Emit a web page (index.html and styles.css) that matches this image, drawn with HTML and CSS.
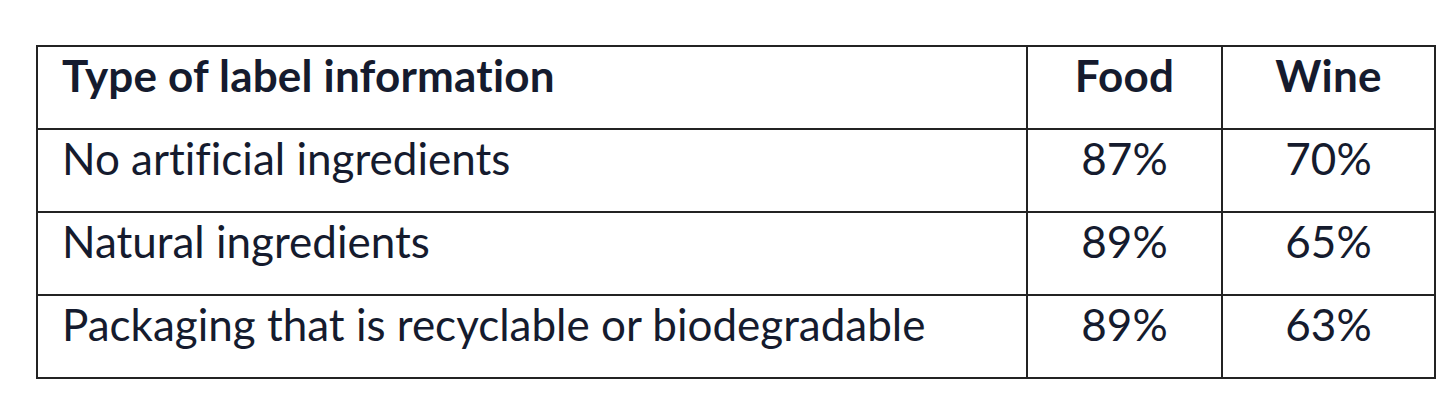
FILE: index.html
```html
<!DOCTYPE html>
<html lang="en">
<head>
<meta charset="utf-8">
<title>Label information</title>
<link rel="stylesheet" href="styles.css">
</head>
<body>
<table class="label-table">
  <colgroup>
    <col class="col-type">
    <col class="col-food">
    <col class="col-wine">
  </colgroup>
  <thead>
    <tr>
      <th class="cell cell-text">Type of label information</th>
      <th class="cell cell-num">Food</th>
      <th class="cell cell-num">Wine</th>
    </tr>
  </thead>
  <tbody>
    <tr>
      <td class="cell cell-text">No artificial ingredients</td>
      <td class="cell cell-num">87%</td>
      <td class="cell cell-num">70%</td>
    </tr>
    <tr>
      <td class="cell cell-text">Natural ingredients</td>
      <td class="cell cell-num">89%</td>
      <td class="cell cell-num">65%</td>
    </tr>
    <tr>
      <td class="cell cell-text">Packaging that is recyclable or biodegradable</td>
      <td class="cell cell-num">89%</td>
      <td class="cell cell-num">63%</td>
    </tr>
  </tbody>
</table>
</body>
</html>
```
FILE: styles.css
```css
html, body {
  margin: 0;
  padding: 0;
  background: #ffffff;
}

body {
  padding: 45px 0 0 36px;
  font-family: Lato, "Open Sans", "Liberation Sans", sans-serif;
  color: #151b2e;
}

.label-table {
  border-collapse: collapse;
  table-layout: fixed;
  width: 1398px;
}

.col-type { width: 990px; }
.col-food { width: 195px; }
.col-wine { width: 213px; }

.cell {
  border: 2px solid #232323;
  height: 79px;
  padding: 2px 0 0 0;
  vertical-align: top;
  font-size: 44px;
  line-height: 53px;
  font-weight: 400;
  white-space: nowrap;
  font-variant-ligatures: none;
}

th.cell {
  font-weight: 700;
  letter-spacing: 0.2px;
}

.cell-text {
  text-align: left;
  padding-left: 24px;
}

.cell-num {
  text-align: center;
}
```
